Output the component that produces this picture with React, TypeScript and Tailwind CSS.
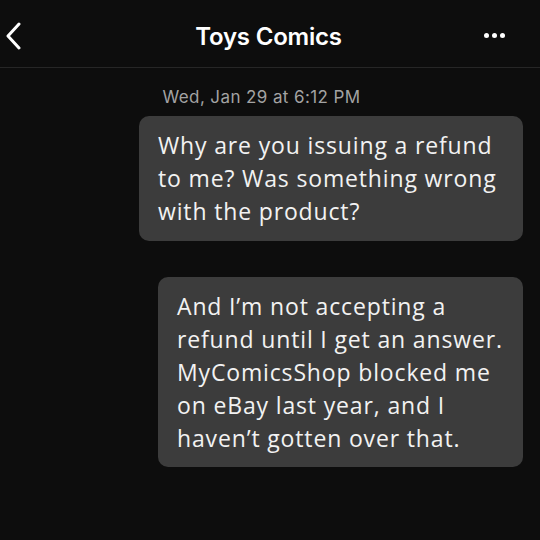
export default function App() {
  return (
    <div className="w-[540px] h-[540px] bg-[#0d0d0d] text-white overflow-hidden font-['Inter',sans-serif]">
      {/* Header */}
      <div className="h-[68px] flex items-center justify-between px-[5px] border-b border-[#262626]">
        <svg className="w-[18px] h-[28px] mt-[4px]" viewBox="0 0 18 28" fill="none">
          <path d="M14 2 L3 14 L14 26" stroke="white" strokeWidth="3" strokeLinecap="round" strokeLinejoin="round" />
        </svg>
        <div className="text-[24px] font-semibold tracking-[-0.2px] pl-[30px] mt-[6px]">Toys Comics</div>
        <div className="flex gap-[3px] pr-[30px] mt-[4px]">
          <span className="w-[5px] h-[5px] rounded-full bg-white" />
          <span className="w-[5px] h-[5px] rounded-full bg-white" />
          <span className="w-[5px] h-[5px] rounded-full bg-white" />
        </div>
      </div>

      {/* Date */}
      <div className="text-center text-[17px] tracking-[0.4px] text-[#a3a3a3] pt-[17px] pr-[17px]">Wed, Jan 29 at 6:12 PM</div>

      {/* Messages */}
      <div className="flex flex-col items-end pr-[17px] gap-[36px] pt-[5px] font-['Open_Sans',sans-serif]">
        <div className="w-[384px] bg-[#3c3c3c] rounded-[10px] pl-[19px] pr-[6px] pt-[13px] pb-[13px] text-[23px] leading-[33px] tracking-[0.85px] text-[#f2f2f2] whitespace-nowrap">
          Why are you issuing a refund
          <br />
          to me? Was something wrong
          <br />
          with the product?
        </div>
        <div className="w-[365px] bg-[#3c3c3c] rounded-[10px] pl-[19px] pr-[6px] pt-[13px] pb-[12px] text-[23px] leading-[33px] tracking-[0.85px] text-[#f2f2f2] whitespace-nowrap">
          And I’m not accepting a
          <br />
          refund until I get an answer.
          <br />
          MyComicsShop blocked me
          <br />
          on eBay last year, and I
          <br />
          haven’t gotten over that.
        </div>
      </div>
    </div>
  );
}
